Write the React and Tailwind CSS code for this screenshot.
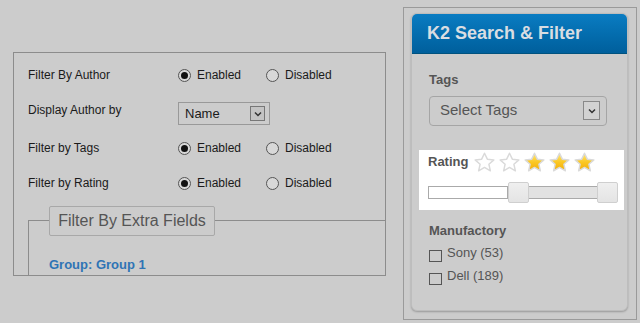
import React from 'react';

const font = { fontFamily: '"Liberation Sans", Arial, sans-serif' };

function Radio({ checked }) {
  return (
    <span className="flex h-[13px] w-[13px] items-center justify-center rounded-full border border-[#555] bg-[#d8d8d8]">
      {checked && <span className="h-[7px] w-[7px] rounded-full bg-[#111]" />}
    </span>
  );
}

function Toggle() {
  return (
    <div className="flex items-center">
      <label className="flex w-[88px] items-center gap-[6px]">
        <Radio checked />
        <span>Enabled</span>
      </label>
      <label className="flex items-center gap-[6px]">
        <Radio />
        <span>Disabled</span>
      </label>
    </div>
  );
}

function Star({ filled }) {
  const d = 'M10 1.2 L12.7 6.8 L18.9 7.5 L14.2 11.7 L15.6 17.9 L10 14.7 L4.4 17.9 L5.8 11.7 L1.1 7.5 L7.3 6.8 Z';
  return (
    <svg width="21" height="20" viewBox="0 0 20 19">
      <defs>
        <linearGradient id="sg" x1="0" y1="0" x2="0" y2="1">
          <stop offset="0" stopColor="#ffe878" />
          <stop offset="0.5" stopColor="#fbc825" />
          <stop offset="1" stopColor="#f3ac06" />
        </linearGradient>
      </defs>
      <path d={d} fill={filled ? 'url(#sg)' : '#fff'} stroke="#dadada" strokeWidth="1.4" strokeLinejoin="round" />
    </svg>
  );
}

function Check({ label }) {
  return (
    <div className="flex h-[16px] items-start gap-[5px]">
      <span className="mt-[5px] h-[12px] w-[13px] shrink-0 border border-[#555]" />
      <span className="leading-[16px]">{label}</span>
    </div>
  );
}

export default function App() {
  return (
    <div style={font} className="flex h-[323px] w-[640px] overflow-hidden bg-[#cccccc]">
      {/* Left settings panel */}
      <div className="ml-[13px] mt-[52px] h-[224px] w-[373px] overflow-hidden border border-[#8c8c8c] text-[12px] text-[#1a1a1a]">
        <div className="pl-[14px] pt-[12px]">
          <div className="flex h-[20px] items-center">
            <span className="w-[150px]">Filter By Author</span>
            <Toggle />
          </div>
          <div className="mt-[17px] flex items-start">
            <span className="w-[150px] leading-4">Display Author by</span>
            <div className="flex h-[23px] w-[92px] items-center justify-between border border-[#999] pl-[6px] pr-[4px] text-[13px]">
              <span>Name</span>
              <span className="flex h-[15px] w-[15px] items-center justify-center border border-[#777] bg-[#c4c4c4]">
                <svg width="8" height="6" viewBox="0 0 8 6">
                  <path d="M1 1.5 L4 4.5 L7 1.5" fill="none" stroke="#333" strokeWidth="1.5" />
                </svg>
              </span>
            </div>
          </div>
          <div className="mt-[13px] flex h-[20px] items-center">
            <span className="w-[150px]">Filter by Tags</span>
            <Toggle />
          </div>
          <div className="mt-[15px] flex h-[20px] items-center">
            <span className="w-[150px]">Filter by Rating</span>
            <Toggle />
          </div>
          <div className="mt-[27px] h-[80px] w-[400px] border-l border-t border-[#8c8c8c]">
            <div className="-mt-[15px] ml-[20px] flex h-[30px] w-[166px] items-center justify-center rounded-[2px] border border-[#a8a8a8] bg-[#cccccc] text-[16px] text-[#555]">
              Filter By Extra Fields
            </div>
            <div className="ml-[20px] mt-[19px] text-[13px] font-bold text-[#2f74b5]">Group: Group 1</div>
          </div>
        </div>
      </div>

      {/* Right module */}
      <div className="ml-[17px] mt-[7px] h-[313px] w-[234px] border border-[#9a9a9a] pl-[7px] pt-[5px]">
        <div className="h-[298px] w-[217px] overflow-hidden rounded-[6px] border border-[#bdbdbd] bg-[#cccccc] shadow-[0_1px_2px_rgba(0,0,0,0.25)]">
          <div className="flex h-[40px] items-center border-b border-[#00527f] bg-gradient-to-b from-[#0a7cc2] to-[#005f9c] pl-[15px] text-[18px] font-bold text-[#d9dde2]">
            K2 Search &amp; Filter
          </div>
          <div className="pt-[16px]">
            <div className="pl-[17px] text-[13px] font-bold text-[#555]">Tags</div>
            <div className="ml-[17px] mt-[6px] flex h-[30px] w-[178px] items-center justify-between rounded-[4px] border border-[#a5a5a5] pl-[10px] pr-[6px] text-[15px] text-[#555]">
              <span>Select Tags</span>
              <span className="flex h-[19px] w-[17px] items-center justify-center border border-[#888] bg-[#d2d2d2]">
                <svg width="8" height="6" viewBox="0 0 8 6">
                  <path d="M1 1.5 L4 4.5 L7 1.5" fill="none" stroke="#333" strokeWidth="1.5" />
                </svg>
              </span>
            </div>
            <div className="ml-[7px] mt-[24px] h-[60px] w-[205px] bg-white pl-[9px] pt-[2px]">
              <div className="flex items-center">
                <span className="mr-[6px] text-[13px] font-bold text-[#555]">Rating</span>
                <div className="flex gap-[4px]">
                  <Star />
                  <Star />
                  <Star filled />
                  <Star filled />
                  <Star filled />
                </div>
              </div>
              <div className="relative mt-[14px] h-[13px] w-[190px]">
                <div className="flex h-[13px]">
                  <div className="w-[80px] border border-[#aaa] bg-white" />
                  <div className="flex-1 border-y border-[#aaa] bg-[#e2e2e2]" />
                </div>
                <div className="absolute left-[80px] top-[-4px] h-[21px] w-[21px] rounded-[2px] border border-[#cfcfcf] bg-gradient-to-b from-[#efefef] to-[#e4e4e4]" />
                <div className="absolute left-[169px] top-[-4px] h-[21px] w-[21px] rounded-[2px] border border-[#cfcfcf] bg-gradient-to-b from-[#efefef] to-[#e4e4e4]" />
              </div>
            </div>
            <div className="mt-[11px] pl-[17px] text-[13px] font-bold text-[#555]">Manufactory</div>
            <div className="mt-[5px] flex flex-col gap-[7px] pl-[17px] text-[13px] text-[#555]">
              <Check label="Sony (53)" />
              <Check label="Dell (189)" />
            </div>
          </div>
        </div>
      </div>
    </div>
  );
}
